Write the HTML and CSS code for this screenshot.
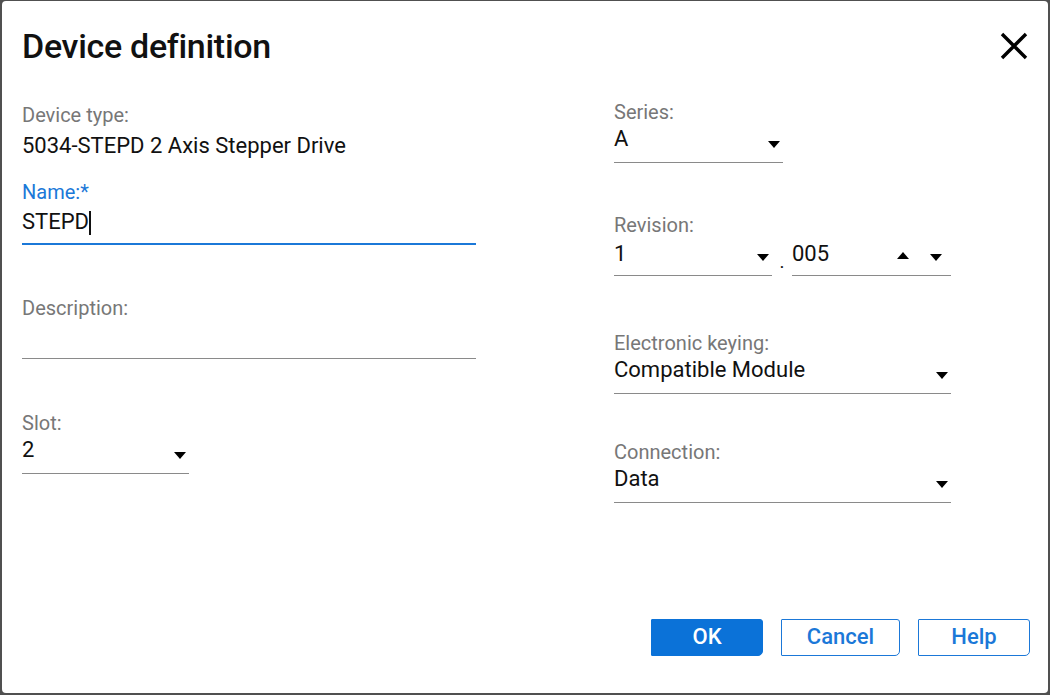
FILE: index.html
```html
<!DOCTYPE html>
<html lang="en">
<head>
<meta charset="UTF-8">
<title>Device definition</title>
<link rel="stylesheet" href="styles.css">
</head>
<body>
<div class="dialog">
  <div class="dlg-head">
    <div class="dlg-title">Device definition</div>
    <div class="dlg-close">
      <svg width="28" height="28" viewBox="0 0 28 28"><path d="M2 2 L26 26 M26 2 L2 26" stroke="#000" stroke-width="3.4" fill="none"/></svg>
    </div>
  </div>

  <div class="dlg-body">
    <div class="col col-left">
      <div class="info">
        <div class="lbl">Device type:</div>
        <div class="info-val">5034-STEPD 2 Axis Stepper Drive</div>
      </div>

      <div class="field f-name">
        <div class="lbl lbl-active">Name:*</div>
        <div class="ctl ctl-active"><span>STEPD</span><span class="caret"></span></div>
      </div>

      <div class="field f-desc">
        <div class="lbl">Description:</div>
        <div class="ctl"></div>
      </div>

      <div class="field f-gap">
        <div class="lbl">Slot:</div>
        <div class="ctl w-slot"><span class="val">2</span><svg class="tri" width="12" height="7" viewBox="0 0 12 7"><polygon points="0,0 12,0 6,7"/></svg></div>
      </div>
    </div>

    <div class="col col-right">
      <div class="field">
        <div class="lbl">Series:</div>
        <div class="ctl w-series"><span class="val">A</span><svg class="tri" width="12" height="7" viewBox="0 0 12 7"><polygon points="0,0 12,0 6,7"/></svg></div>
      </div>

      <div class="field f-rev">
        <div class="lbl">Revision:</div>
        <div class="split">
          <div class="ctl w-major"><span class="val">1</span><svg class="tri" width="12" height="7" viewBox="0 0 12 7"><polygon points="0,0 12,0 6,7"/></svg></div>
          <div class="dot">.</div>
          <div class="ctl w-minor"><span class="val">005</span>
            <svg class="tri tri-up" width="12" height="7" viewBox="0 0 12 7"><polygon points="0,7 12,7 6,0"/></svg>
            <svg class="tri tri-down" width="12" height="7" viewBox="0 0 12 7"><polygon points="0,0 12,0 6,7"/></svg>
          </div>
        </div>
      </div>

      <div class="field f-key">
        <div class="lbl">Electronic keying:</div>
        <div class="ctl w-wide"><span class="val">Compatible Module</span><svg class="tri" width="12" height="7" viewBox="0 0 12 7"><polygon points="0,0 12,0 6,7"/></svg></div>
      </div>

      <div class="field f-conn">
        <div class="lbl">Connection:</div>
        <div class="ctl w-wide"><span class="val">Data</span><svg class="tri" width="12" height="7" viewBox="0 0 12 7"><polygon points="0,0 12,0 6,7"/></svg></div>
      </div>
    </div>
  </div>

  <div class="dlg-foot">
    <div class="btn btn-primary w-ok">OK</div>
    <div class="btn w-cancel">Cancel</div>
    <div class="btn w-help">Help</div>
  </div>
</div>
</body>
</html>
```

FILE: styles.css
```css
* {
padding: 0px;
margin: 0px;
box-sizing: border-box;
}

html,
body {
width: 100%;
height: 100%;
}

body {
background: #505050;
padding: 1px 2px 2px 2px;
font-family: Roboto, "Liberation Sans", sans-serif;
color: #111;
}

.dialog {
background: #fff;
width: 1046px;
height: 692px;
border-radius: 4px;
display: flex;
flex-direction: column;
}

.dlg-head {
display: flex;
justify-content: space-between;
align-items: center;
padding: 22px 20px 0 20px;
height: 68px;
}

.dlg-title {
font-size: 34px;
font-weight: 500;
line-height: 46px;
letter-spacing: -0.3px;
}

.dlg-close {
width: 28px;
height: 28px;
}

.dlg-close svg {
display: block;
}

.dlg-body {
display: grid;
grid-template-columns: 454px 337px;
column-gap: 138px;
padding: 0 20px;
}

.col-left {
padding-top: 36px;
}

.col-right {
padding-top: 33px;
}

.lbl {
font-size: 20px;
line-height: 20px;
color: #777;
white-space: nowrap;
}

.lbl-active {
color: #1b78d8;
}

.info-val {
font-size: 22px;
line-height: 24px;
padding-top: 9px;
}

.field {
display: flex;
flex-direction: column;
}

.f-name {
margin-top: 24px;
}

.f-desc {
margin-top: 53px;
}

.f-gap {
margin-top: 54px;
}

.f-rev {
margin-top: 52px;
}

.f-key {
margin-top: 57px;
}

.f-conn {
margin-top: 48px;
}

.ctl {
height: 41px;
padding-top: 7px;
border-bottom: 1px solid #8a8a8a;
display: flex;
align-items: flex-start;
font-size: 22px;
line-height: 24px;
}

.ctl-active {
border-bottom: 2px solid #1b78d8;
height: 43px;
padding-top: 8px;
}

.caret {
display: inline-block;
width: 1.5px;
height: 24px;
margin-top: 1px;
background: #111;
}

.val {
flex: 1;
white-space: nowrap;
}

.tri {
margin-top: 12px;
margin-right: 3px;
fill: #000;
flex: none;
}

.w-slot {
width: 167px;
}

.w-slot .val {
margin-top: -2px;
}

.w-series {
width: 169px;
}

.w-wide {
width: 337px;
}

.w-series .val,
.w-wide .val {
margin-top: -2px;
}

.split {
display: flex;
}

.w-major {
width: 158px;
}

.w-minor {
width: 159px;
}

.tri-up {
margin-right: 21px;
margin-top: 10px;
}

.tri-down {
margin-right: 9px;
}

.dot {
width: 20px;
text-align: center;
font-size: 19px;
line-height: 24px;
padding-top: 15px;
}

.dlg-foot {
margin-top: auto;
display: flex;
justify-content: flex-end;
gap: 18px;
padding: 0 18px 37px 0;
}

.btn {
height: 37px;
border: 1.5px solid #1b78d8;
border-radius: 1px 3px 5px 1px;
color: #1b78d8;
font-size: 22px;
font-weight: 500;
line-height: 34px;
text-align: center;
}

.btn-primary {
background: #0b72d8;
border-color: #0b72d8;
color: #fff;
}

.w-ok {
width: 112px;
}

.w-cancel {
width: 119px;
}

.w-help {
width: 112px;
}
```
